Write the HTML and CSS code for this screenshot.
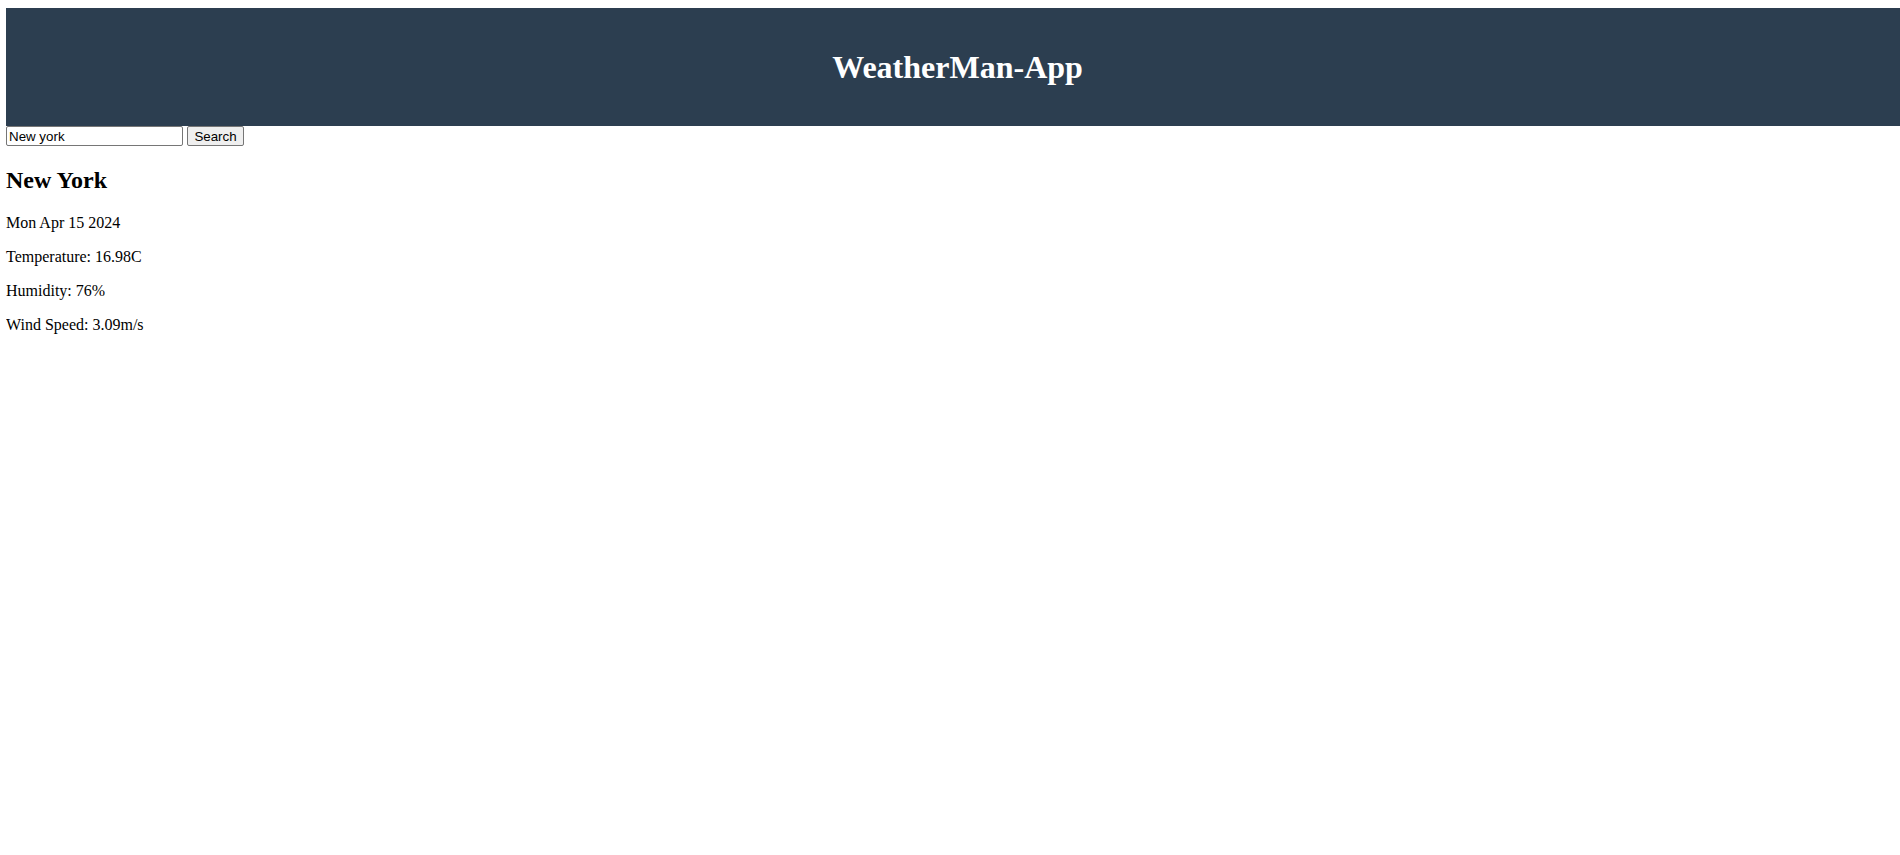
FILE: index.html
```html
<!DOCTYPE html>
<html lang="en">
<head>
<meta charset="utf-8">
<title>WeatherMan-App</title>
<link rel="stylesheet" href="styles.css">
</head>
<body>
<header class="app-header">
  <h1 class="app-title">WeatherMan-App</h1>
</header>
<div class="search-bar">
  <input class="search-input" type="text" value="New york">
  <button class="search-button" type="button">Search</button>
</div>
<section class="weather">
  <h2 class="city">New York</h2>
  <p class="line">Mon Apr 15 2024</p>
  <p class="line">Temperature: 16.98C</p>
  <p class="line">Humidity: 76%</p>
  <p class="line">Wind Speed: 3.09m/s</p>
</section>
</body>
</html>
```
FILE: styles.css
```css
html, body {
  background: #ffffff;
}
body {
  margin: 8px 0 0 6px;
  font-family: "Liberation Serif", "Times New Roman", serif;
  font-size: 16px;
  color: #000000;
}
.app-header {
  background: #2c3e50;
  padding: 20px 0;
  height: 118px;
  box-sizing: border-box;
}
.app-title {
  margin: 21px 0;
  padding-left: 9px;
  font-size: 32px;
  font-weight: bold;
  color: #ffffff;
  text-align: center;
  line-height: 36px;
}
.search-bar {
  display: flex;
  align-items: flex-start;
  gap: 4px;
  height: 20px;
}
.search-input {
  box-sizing: border-box;
  width: 177px;
  height: 20px;
  margin: 0;
  padding: 1px 2px;
  border: 1px solid #767676;
  border-radius: 2px;
  font-family: "Liberation Sans", Arial, sans-serif;
  font-size: 13.333px;
  color: #000000;
  background: #ffffff;
}
.search-button {
  box-sizing: border-box;
  width: 57px;
  height: 20px;
  margin: 0;
  padding: 1px 6px;
  border: 1px solid #767676;
  border-radius: 2px;
  background: #efefef;
  font-family: "Liberation Sans", Arial, sans-serif;
  font-size: 13.333px;
  color: #000000;
}
.weather {
  padding-top: 1px;
}
.city {
  margin: 19.92px 0;
  font-size: 24px;
  font-weight: bold;
}
.line {
  margin: 16px 0;
}
```
